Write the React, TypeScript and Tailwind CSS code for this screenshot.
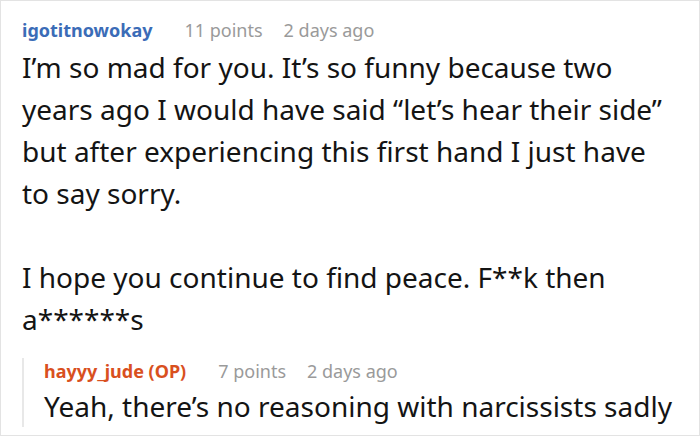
import React from "react";

export default function App() {
  return (
    <div
      className="w-[700px] h-[436px] bg-white border border-[#e3e3e3] overflow-hidden"
      style={{ fontFamily: '"Noto Sans", "Open Sans", sans-serif' }}
    >
      <div className="pl-[21px] pt-[16px] pr-2">
        <div className="flex items-baseline text-[18px] leading-[26px] whitespace-nowrap">
          <span className="font-bold text-[#3b6cb7]">igotitnowokay</span>
          <span className="ml-[32px] text-[#9a9a9a]">11 points</span>
          <span className="ml-[21px] text-[#9a9a9a]">2 days ago</span>
        </div>
        <div className="text-[28px] leading-[42px] text-[#141414] mt-[3px] whitespace-nowrap">
          <p>
            I’m so mad for you. It’s so funny because two
            <br />
            years ago I would have said “let’s hear their side”
            <br />
            but after experiencing this first hand I just have
            <br />
            to say sorry.
          </p>
          <p className="mt-[42px]">
            I hope you continue to find peace. F**k then
            <br />
            a******s
          </p>
        </div>
        <div className="mt-[28px] border-l-2 border-[#e8e8e8] pl-[20px]">
          <div className="-mt-[10px] flex items-baseline text-[18px] leading-[26px] whitespace-nowrap">
            <span className="font-bold text-[#d9501e]">hayyy_jude (OP)</span>
            <span className="ml-[32px] text-[#9a9a9a]">7 points</span>
            <span className="ml-[21px] text-[#9a9a9a]">2 days ago</span>
          </div>
          <div className="mt-[1px] -mb-[9px] text-[28px] leading-[42px] text-[#141414] whitespace-nowrap">
            Yeah, there’s no reasoning with narcissists sadly
          </div>
        </div>
      </div>
    </div>
  );
}
